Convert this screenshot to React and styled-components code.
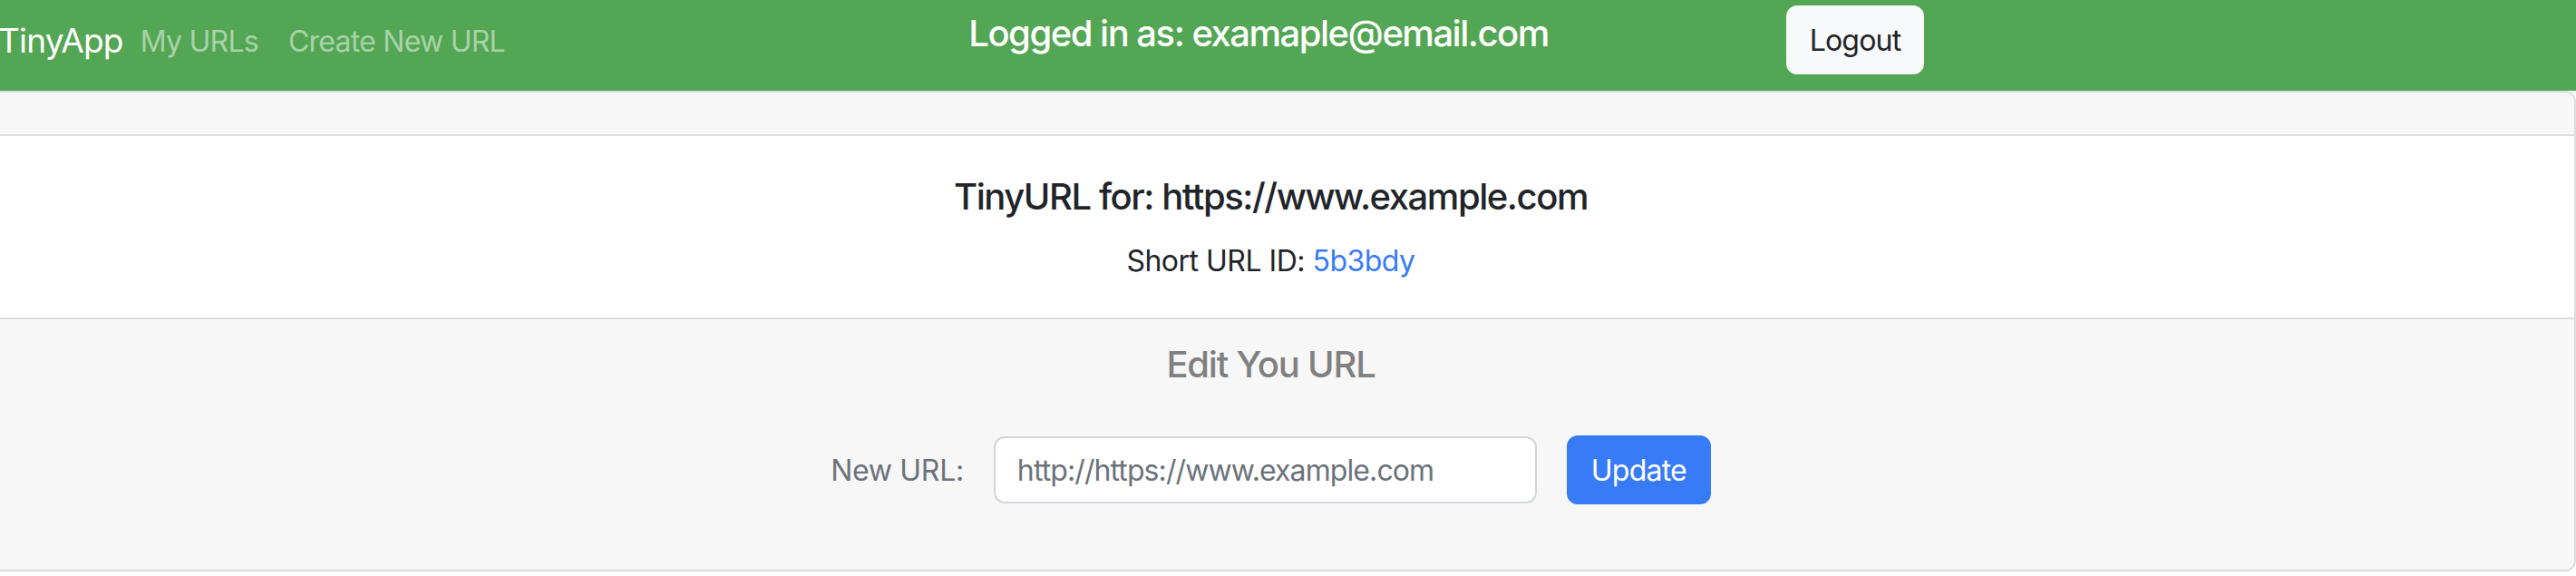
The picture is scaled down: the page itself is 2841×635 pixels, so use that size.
import styled, { createGlobalStyle } from "styled-components";

const GlobalStyle = createGlobalStyle`
  html, body {
    margin: 0;
    padding: 0;
    background: #ffffff;
    overflow: hidden;
  }
  body {
    font-family: Inter, "Noto Sans", "Liberation Sans", sans-serif;
    color: #212529;
  }
  * {
    box-sizing: border-box;
  }
`;

// the shot was taken with the page scrolled a little to the right
const Page = styled.div`
  width: calc(100% + 38px);
  margin-left: -38px;
`;

const Navbar = styled.nav`
  display: grid;
  grid-template-columns: 1fr auto 1fr;
  align-items: center;
  height: 100px;
  padding: 0 63px 0 36px;
  background: #53a653;
`;

const NavLeft = styled.div`
  display: flex;
  align-items: center;
`;

const Brand = styled.a`
  font-size: 37px;
  color: #ffffff;
  margin-right: 19px;
  padding-bottom: 12px;
  letter-spacing: -0.8px;
`;

const NavLink = styled.a`
  font-size: 32px;
  color: rgba(255, 255, 255, 0.5);
  margin-right: 33px;
  padding-bottom: 10px;
  letter-spacing: -0.75px;
`;

const LoggedIn = styled.h3`
  margin: 0 0 28px;
  font-size: 40px;
  font-weight: 500;
  color: #ffffff;
  letter-spacing: -1.5px;
`;

const NavRight = styled.div`
  display: flex;
  align-items: center;
  padding-left: 262px;
  align-self: start;
  padding-top: 6px;
`;

const LightButton = styled.button`
  height: 76px;
  padding: 0 24px;
  font-family: inherit;
  font-size: 32px;
  color: #212529;
  background: #f8f9fa;
  border: 2px solid #f8f9fa;
  border-radius: 12px;
  letter-spacing: -0.8px;
`;

const Card = styled.section`
  border: 2px solid #dcdcdc;
  border-radius: 0 12px 12px 0;
  overflow: hidden;
`;

const CardHeader = styled.div`
  height: 48px;
  background: #f7f7f7;
  border-bottom: 2px solid #dcdcdc;
`;

const CardBody = styled.div`
  display: flex;
  flex-direction: column;
  align-items: center;
  height: 200px;
  padding-top: 43px;
  background: #ffffff;
`;

const Title = styled.h5`
  margin: 0 0 23px;
  font-size: 40px;
  font-weight: 500;
  line-height: 48px;
  color: ${(p) => p.$color || "#212529"};
  letter-spacing: ${(p) => p.$spacing || "-1.45px"};
`;

const Text = styled.p`
  margin: 0;
  font-size: 32px;
  line-height: 48px;
  letter-spacing: -0.5px;
`;

const ShortLink = styled.a`
  color: #387cf6;
  text-decoration: none;
`;

const CardFooter = styled.div`
  display: flex;
  flex-direction: column;
  align-items: center;
  height: 278px;
  padding-top: 26px;
  background: #f7f7f7;
  border-top: 2px solid #dcdcdc;
`;

const Form = styled.form`
  display: flex;
  align-items: center;
  gap: 33px;
  margin-top: 31px;
`;

const Label = styled.label`
  font-size: 32px;
  color: #6c727a;
  letter-spacing: -0.3px;
`;

const Input = styled.input`
  width: 599px;
  height: 74px;
  padding: 0 24px;
  font-family: inherit;
  font-size: 32px;
  color: #6c727a;
  background: #ffffff;
  border: 2px solid #d1d5da;
  border-radius: 12px;
  letter-spacing: -0.9px;
  outline: none;
`;

const PrimaryButton = styled.button`
  height: 76px;
  padding: 0 25px;
  font-family: inherit;
  font-size: 32px;
  color: #ffffff;
  background: #387bf6;
  border: 2px solid #387bf6;
  border-radius: 12px;
  letter-spacing: -0.8px;
`;

export default function App() {
  return (
    <>
      <GlobalStyle />
      <Page>
        <Navbar>
          <NavLeft>
            <Brand>TinyApp</Brand>
            <NavLink>My URLs</NavLink>
            <NavLink>Create New URL</NavLink>
          </NavLeft>
          <LoggedIn>Logged in as: examaple@email.com</LoggedIn>
          <NavRight>
            <LightButton>Logout</LightButton>
          </NavRight>
        </Navbar>
        <Card>
          <CardHeader />
          <CardBody>
            <Title>TinyURL for: https://www.example.com</Title>
            <Text>
              Short URL ID: <ShortLink href="#">5b3bdy</ShortLink>
            </Text>
          </CardBody>
          <CardFooter>
            <Title $color="#808080" $spacing="-1.2px">
              Edit You URL
            </Title>
            <Form onSubmit={(e) => e.preventDefault()}>
              <Label htmlFor="longURL">New URL:</Label>
              <Input
                id="longURL"
                type="text"
                defaultValue="http://https://www.example.com"
              />
              <PrimaryButton type="submit">Update</PrimaryButton>
            </Form>
          </CardFooter>
        </Card>
      </Page>
    </>
  );
}
